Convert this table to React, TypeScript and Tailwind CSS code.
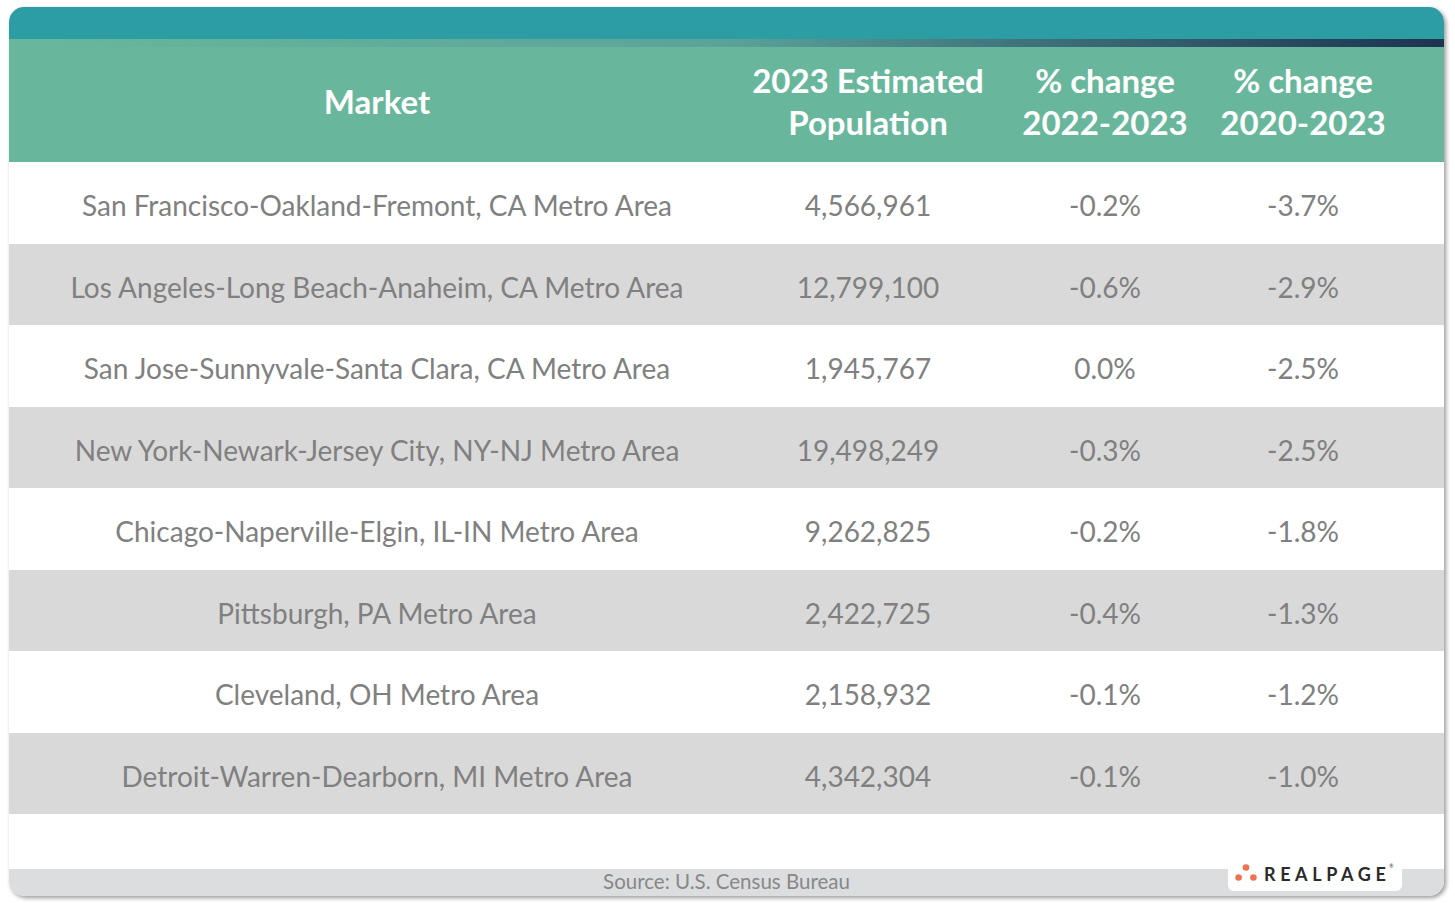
const rows = [
  ["San Francisco-Oakland-Fremont, CA Metro Area", "4,566,961", "-0.2%", "-3.7%"],
  ["Los Angeles-Long Beach-Anaheim, CA Metro Area", "12,799,100", "-0.6%", "-2.9%"],
  ["San Jose-Sunnyvale-Santa Clara, CA Metro Area", "1,945,767", "0.0%", "-2.5%"],
  ["New York-Newark-Jersey City, NY-NJ Metro Area", "19,498,249", "-0.3%", "-2.5%"],
  ["Chicago-Naperville-Elgin, IL-IN Metro Area", "9,262,825", "-0.2%", "-1.8%"],
  ["Pittsburgh, PA Metro Area", "2,422,725", "-0.4%", "-1.3%"],
  ["Cleveland, OH Metro Area", "2,158,932", "-0.1%", "-1.2%"],
  ["Detroit-Warren-Dearborn, MI Metro Area", "4,342,304", "-0.1%", "-1.0%"],
];

const cols = "grid grid-cols-[736px_246px_228px_168px_1fr]";

function RealPageLogo() {
  return (
    <div className="absolute right-[42px] bottom-[5px] w-[174px] h-[30px] bg-white rounded-b-[6px] flex items-center pl-[7px] gap-[7px] pb-[8px]">
      <svg width="22" height="20" viewBox="0 0 22 20">
        <circle cx="11" cy="5.5" r="3.3" fill="#ee7254" />
        <circle cx="3.6" cy="15.5" r="3.3" fill="#ee7254" />
        <circle cx="18.4" cy="15.5" r="3.3" fill="#ee7254" />
      </svg>
      <span className="relative text-[18px] font-bold tracking-[4.6px] text-[#2b2b2b] leading-none pt-[3px]">
        REALPAGE
        <span className="absolute right-[-3px] top-[2px] text-[5px] tracking-normal font-normal">®</span>
      </span>
    </div>
  );
}

export default function App() {
  return (
    <div className="w-[1455px] h-[903px] bg-white pt-[7px] pl-[9px] font-['Lato','Liberation_Sans',sans-serif]">
      <div className="relative w-[1435px] h-[889px] rounded-[15px] overflow-hidden bg-white shadow-[2px_2px_4px_rgba(0,0,0,0.4)] flex flex-col">
        {/* top band */}
        <div className="h-[32px] bg-[#2c9da3]" />

        {/* header */}
        <div className="h-[123px] bg-[#68b79d] flex flex-col">
          <div className="h-[8px] bg-gradient-to-r from-[#68b79d] via-[#5aa39a] to-[#1d3350]" />
          <div className={`${cols} flex-1 text-white font-bold text-[33px] leading-[42px] text-center items-center pb-[8px]`}>
            <div>Market</div>
            <div>2023 Estimated<br />Population</div>
            <div>% change<br />2022-2023</div>
            <div>% change<br />2020-2023</div>
            <div />
          </div>
        </div>

        {/* rows */}
        {rows.map((r, i) => (
          <div
            key={i}
            className={`${cols} h-[81.5px] items-center text-center text-[28px] text-[#808080] pt-[5px] ${i % 2 === 1 ? "bg-[#d9d9d9]" : "bg-white"}`}
          >
            <div>{r[0]}</div>
            <div>{r[1]}</div>
            <div>{r[2]}</div>
            <div>{r[3]}</div>
            <div />
          </div>
        ))}

        <div className="flex-1" />

        {/* footer */}
        <div className="h-[27px] bg-[#dcdddf] flex items-center justify-center text-[20.5px] text-[#888888] pb-[2px]">
          Source: U.S. Census Bureau
        </div>

        <RealPageLogo />
      </div>
    </div>
  );
}
